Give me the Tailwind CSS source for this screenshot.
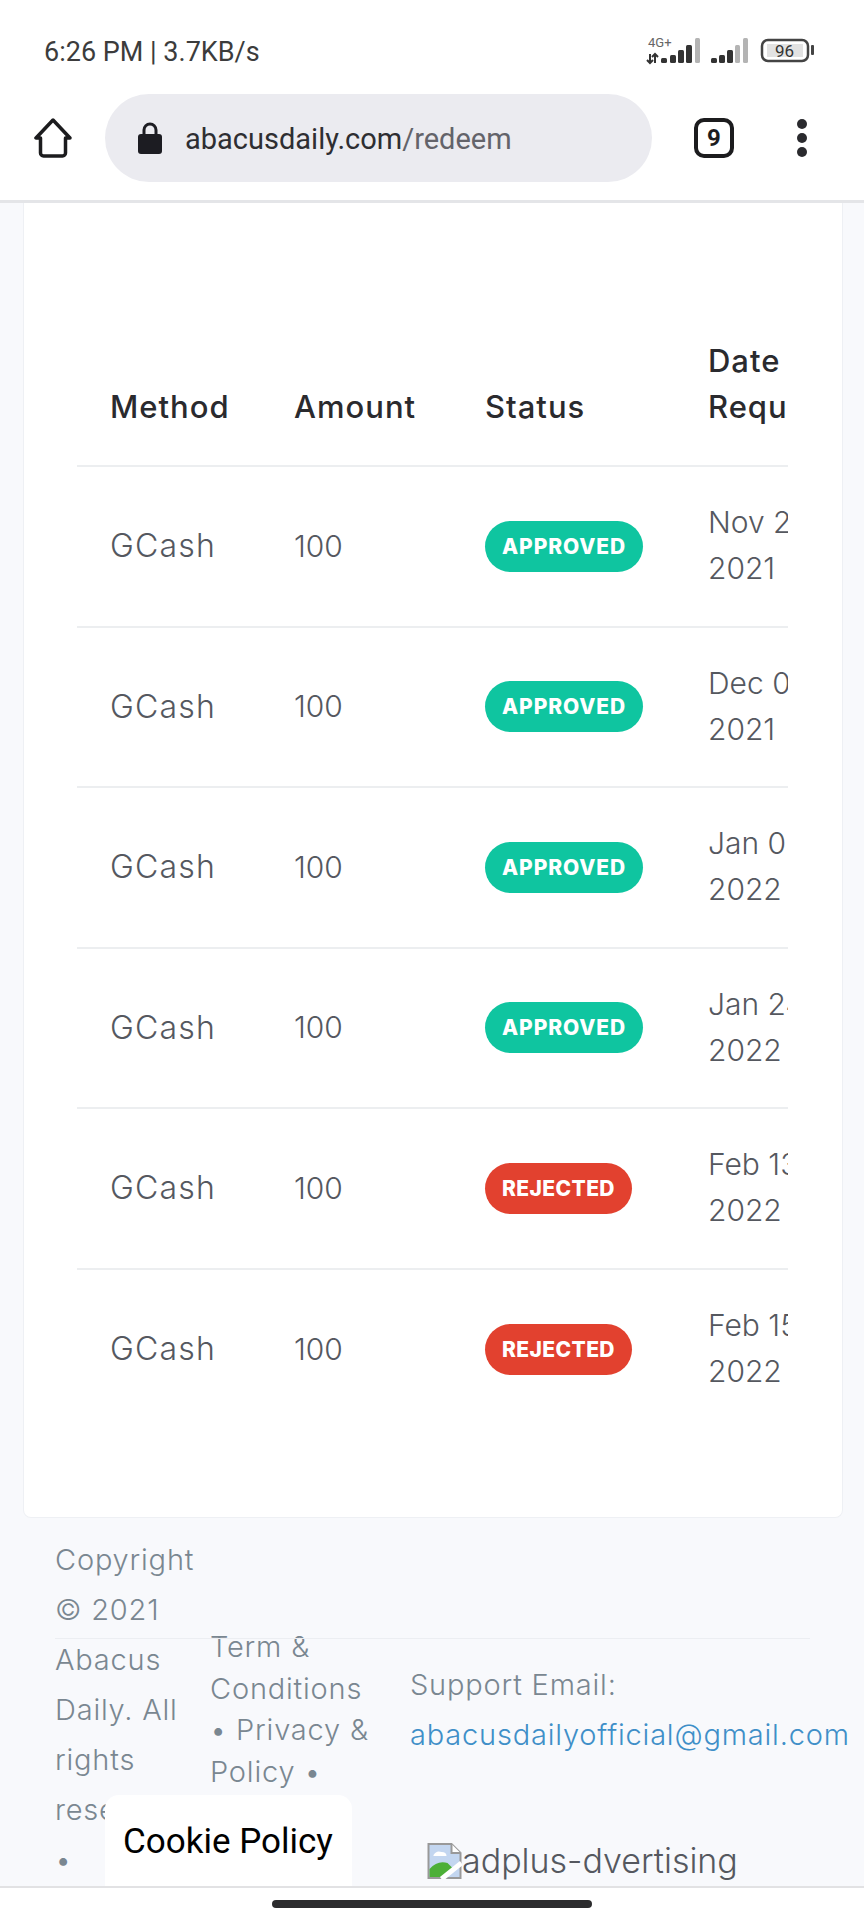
<!DOCTYPE html>
<html lang="en">
<head>
<meta charset="UTF-8">
<meta name="viewport" content="width=device-width, initial-scale=1.0">
<title>Redeem</title>
<script src="https://cdn.jsdelivr.net/npm/@tailwindcss/browser@4"></script>
</head>
<body class="bg-white font-['Inter',sans-serif]">
<div class="relative flex flex-col w-[864px] h-[1920px] overflow-hidden">

  <!-- status bar -->
  <div class="flex items-center justify-between h-[95px] pl-[44px] pr-[48px] pt-[10px] shrink-0">
    <span class="font-['Roboto',sans-serif] text-[27px] text-[#3c3c3c]">6:26 PM | 3.7KB/s</span>
    <svg width="170" height="30" viewBox="0 0 170 30" class="mt-[-4px]">
      <text x="2" y="11" font-size="13" fill="#666" font-family="Roboto">4G+</text>
      <path d="M4 18v9M1 24l3 3 3-3M9 27v-9M6 21l3-3 3 3" stroke="#333" stroke-width="2" fill="none"/>
      <rect x="15" y="22" width="6" height="5" rx="1.500" fill="#333"/>
      <rect x="24" y="19" width="6" height="8" rx="1.500" fill="#333"/>
      <rect x="32" y="14" width="6" height="13" rx="1.500" fill="#333"/>
      <rect x="40" y="9" width="6" height="18" rx="1.500" fill="#333"/>
      <rect x="49" y="2" width="5" height="25" rx="1.500" fill="#b4b4b4"/>
      <rect x="65" y="22" width="6" height="5" rx="1.500" fill="#333"/>
      <rect x="73" y="19" width="6" height="8" rx="1.500" fill="#333"/>
      <rect x="81" y="14" width="6" height="13" rx="1.500" fill="#333"/>
      <rect x="89" y="9" width="5" height="18" rx="1.500" fill="#b4b4b4"/>
      <rect x="97" y="2" width="5" height="25" rx="1.500" fill="#b4b4b4"/>
      <rect x="116" y="4" width="46" height="21" rx="6" fill="#fff" stroke="#444" stroke-width="2.500"/>
      <rect x="121" y="8" width="36" height="13" fill="#e2e2e2"/>
      <text x="129" y="21" font-size="17" fill="#333" font-family="Roboto">96</text>
      <rect x="165" y="9" width="3" height="10" rx="1" fill="#444"/>
    </svg>
  </div>

  <!-- browser toolbar -->
  <div class="flex items-center h-[108px] border-b-[3px] border-[#e4e5e8] shrink-0 pb-[19px]">
    <svg width="40" height="40" viewBox="0 0 40 40" fill="none" class="ml-[33px]">
      <path d="M20 2 3 20h4.500v15a3 3 0 0 0 3 3h19a3 3 0 0 0 3-3V20H37Z" stroke="#1c1c1e" stroke-width="3.500" stroke-linejoin="round"/>
    </svg>
    <div class="flex items-center w-[547px] h-[88px] ml-[32px] rounded-full bg-[#ebebf0] shrink-0">
      <svg width="26" height="32" viewBox="0 0 26 32" class="ml-[32px]">
        <path d="M7 14V8a6 6 0 0 1 12 0v6" stroke="#1c1c22" stroke-width="3" fill="none"/>
        <rect x="1" y="12" width="24" height="20" rx="3" fill="#1c1c22"/>
      </svg>
      <span class="ml-[22px] pt-[3px] font-['Roboto',sans-serif] text-[29px] text-[#2e2e32]">abacusdaily.com<span class="text-[#63636a]">/redeem</span></span>
    </div>
    <div class="flex items-center justify-center w-[40px] h-[40px] ml-[42px] border-[4px] border-[#1c1c1e] rounded-[10px] font-['Roboto',sans-serif] font-bold text-[24px] text-[#1c1c1e]">9</div>
    <div class="flex flex-col gap-[4px] ml-[63px]">
      <span class="w-[10px] h-[10px] rounded-full bg-[#2a2a2e]"></span>
      <span class="w-[10px] h-[10px] rounded-full bg-[#2a2a2e]"></span>
      <span class="w-[10px] h-[10px] rounded-full bg-[#2a2a2e]"></span>
    </div>
  </div>

  <!-- page -->
  <div class="relative flex-1 overflow-hidden bg-[#f8f9fc]">
    <div class="ml-[23px] w-[820px] h-[1315px] bg-white border border-t-0 border-[#eef0f4] rounded-b-[8px] pl-[53px] pt-[62px]">
      <div class="w-[711px] overflow-hidden">
        <table class="w-[800px] table-fixed border-collapse text-left text-[30px] font-light text-[#55585f]">
          <thead>
            <tr class="h-[201px] border-b-2 border-[#eceef0] text-[#2a2a2e] text-[31px] leading-[46px] tracking-[1px] align-bottom">
              <th class="w-[217px] pl-[33px] pb-[35px] font-medium">Method</th>
              <th class="w-[191px] pb-[35px] font-medium">Amount</th>
              <th class="w-[223px] pb-[35px] font-medium">Status</th>
              <th class="pb-[35px] font-medium">Date<br>Requested</th>
            </tr>
          </thead>
          <tbody>
            <tr class="h-[160.500px] border-b-2 border-[#eceef0]">
              <td class="pl-[33px] text-[32px] tracking-[1.200px]">GCash</td><td>100</td>
              <td><span class="inline-flex items-center h-[51px] px-[17px] rounded-full bg-[#0fc5a0] text-white text-[21px] font-extrabold tracking-[0.900px]">APPROVED</span></td>
              <td class="leading-[46px] pb-[2px]">Nov 24,<br>2021</td>
            </tr>
            <tr class="h-[160.500px] border-b-2 border-[#eceef0]">
              <td class="pl-[33px] text-[32px] tracking-[1.200px]">GCash</td><td>100</td>
              <td><span class="inline-flex items-center h-[51px] px-[17px] rounded-full bg-[#0fc5a0] text-white text-[21px] font-extrabold tracking-[0.900px]">APPROVED</span></td>
              <td class="leading-[46px] pb-[2px]">Dec 09,<br>2021</td>
            </tr>
            <tr class="h-[160.500px] border-b-2 border-[#eceef0]">
              <td class="pl-[33px] text-[32px] tracking-[1.200px]">GCash</td><td>100</td>
              <td><span class="inline-flex items-center h-[51px] px-[17px] rounded-full bg-[#0fc5a0] text-white text-[21px] font-extrabold tracking-[0.900px]">APPROVED</span></td>
              <td class="leading-[46px] pb-[2px]">Jan 05,<br>2022</td>
            </tr>
            <tr class="h-[160.500px] border-b-2 border-[#eceef0]">
              <td class="pl-[33px] text-[32px] tracking-[1.200px]">GCash</td><td>100</td>
              <td><span class="inline-flex items-center h-[51px] px-[17px] rounded-full bg-[#0fc5a0] text-white text-[21px] font-extrabold tracking-[0.900px]">APPROVED</span></td>
              <td class="leading-[46px] pb-[2px]">Jan 24,<br>2022</td>
            </tr>
            <tr class="h-[160.500px] border-b-2 border-[#eceef0]">
              <td class="pl-[33px] text-[32px] tracking-[1.200px]">GCash</td><td>100</td>
              <td><span class="inline-flex items-center h-[51px] px-[17px] rounded-full bg-[#e2412f] text-white text-[21px] font-extrabold tracking-[0.400px]">REJECTED</span></td>
              <td class="leading-[46px] pb-[2px]">Feb 13,<br>2022</td>
            </tr>
            <tr class="h-[160.500px]">
              <td class="pl-[33px] text-[32px] tracking-[1.200px]">GCash</td><td>100</td>
              <td><span class="inline-flex items-center h-[51px] px-[17px] rounded-full bg-[#e2412f] text-white text-[21px] font-extrabold tracking-[0.400px]">REJECTED</span></td>
              <td class="leading-[46px] pb-[2px]">Feb 15,<br>2022</td>
            </tr>
          </tbody>
        </table>
      </div>
    </div>

    <!-- footer -->
    <div class="relative flex pl-[55px] text-[29px] tracking-[0.800px] font-light text-[#7a8791]">
      <span class="absolute left-[55px] top-[120px] w-[755px] h-px bg-[#eceef2]"></span>
      <div class="w-[155px] shrink-0 pt-[17px] leading-[50px]">
        <p class="w-[140px]">Copyright © 2021 Abacus Daily. All rights reserved</p>
        <p>•</p>
      </div>
      <div class="w-[200px] shrink-0 pt-[108px] leading-[41.500px]">
        <p class="w-[160px]">Term &amp; Conditions • Privacy &amp; Policy •</p>
      </div>
      <div class="pt-[142px] leading-[50px] whitespace-nowrap">
        <p>Support Email:</p>
        <a class="text-[#3f8fc8]">abacusdailyofficial@gmail.com</a>
      </div>
    </div>

    <!-- broken ad image -->
    <div class="absolute left-[427px] top-[1632px] flex items-center text-[34px] font-light text-[#55585f]">
      <svg width="35" height="36" viewBox="0 0 34 36">
        <path d="M1 1h23l9 9v25H1Z" fill="#c3d6f0" stroke="#999" stroke-width="2"/>
        <path d="M24 1v9h9" fill="#fff" stroke="#999" stroke-width="2"/>
        <path d="M2 34v-8q8-9 18-6l6 6-8 8Z" fill="#4caf37"/>
        <path d="M6 12q3-5 8-3 5 0 5 4H6Z" fill="#fff"/>
        <path d="M14 36 34 20" stroke="#fff" stroke-width="5"/>
      </svg>
      <span>adplus-dvertising</span>
    </div>

    <!-- cookie link over the footer -->
    <div class="absolute left-[105px] top-[1592px] w-[247px] h-[100px] rounded-t-[14px] bg-white pl-[18px] pt-[27px] font-['Roboto',sans-serif] text-[35px] text-black leading-[40px]">Cookie Policy</div>
  </div>

  <!-- gesture bar -->
  <div class="flex items-center justify-center h-[34px] border-t-[2px] border-[#e2e2e4] bg-white shrink-0">
    <span class="w-[320px] h-[8px] rounded-full bg-[#2c2c2e] mb-[1px]"></span>
  </div>
</div>
</body>
</html>
